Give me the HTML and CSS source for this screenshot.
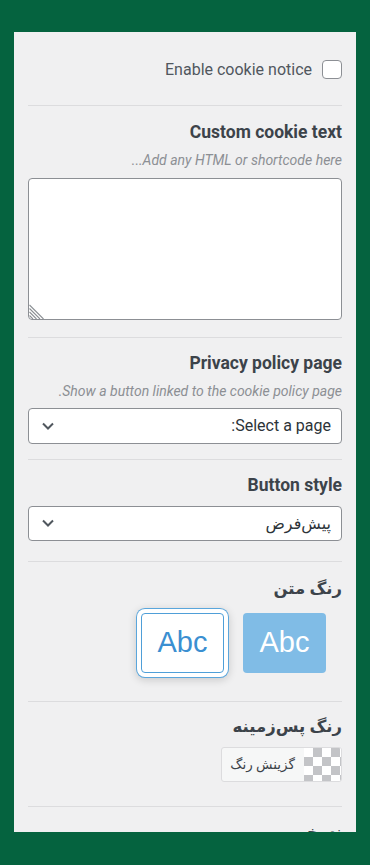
FILE: index.html
```html
<!DOCTYPE html>
<html lang="fa" dir="rtl">
<head>
<meta charset="utf-8">
<title>Cookie notice</title>
<link rel="stylesheet" href="styles.css">
</head>
<body>
<div class="panel">
  <section class="section first">
    <label class="check-row">
      <span class="checkbox"></span>
      <span class="check-label">Enable cookie notice</span>
    </label>
  </section>

  <section class="section s2">
    <h3 class="title">Custom cookie text</h3>
    <p class="desc">Add any HTML or shortcode here...</p>
    <div class="textarea-wrap">
      <textarea class="textarea"></textarea>
      <svg class="grip" width="15" height="15" viewBox="0 0 15 15" aria-hidden="true">
        <g stroke="#8c8f94" stroke-width="1.1">
          <line x1="0.5" y1="1" x2="14.5" y2="15"/>
          <line x1="0.5" y1="4.5" x2="11" y2="15"/>
          <line x1="0.5" y1="8" x2="7.5" y2="15"/>
          <line x1="0.5" y1="11.5" x2="4" y2="15"/>
        </g>
      </svg>
    </div>
  </section>

  <section class="section s3">
    <h3 class="title">Privacy policy page</h3>
    <p class="desc">Show a button linked to the cookie policy page.</p>
    <div class="select sel1">
      <span class="select-text">Select a page:</span>
      <svg class="chev" width="12" height="8" viewBox="0 0 12 8" aria-hidden="true"><polyline points="1,1.5 6,6.5 11,1.5" fill="none" stroke="#50575e" stroke-width="2"/></svg>
    </div>
  </section>

  <section class="section s4">
    <h3 class="title">Button style</h3>
    <div class="select sel2">
      <span class="select-text">پیش‌فرض</span>
      <svg class="chev" width="12" height="8" viewBox="0 0 12 8" aria-hidden="true"><polyline points="1,1.5 6,6.5 11,1.5" fill="none" stroke="#50575e" stroke-width="2"/></svg>
    </div>
  </section>

  <section class="section s5">
    <h3 class="title fa">رنگ متن</h3>
    <div class="abc-row">
      <div class="abc filled">Abc</div>
      <div class="abc outline">Abc</div>
    </div>
  </section>

  <section class="section s6">
    <h3 class="title fa">رنگ پس‌زمینه</h3>
    <div class="picker">
      <span class="swatch"></span>
      <span class="picker-label">گزینش رنگ</span>
    </div>
  </section>

  <section class="section s7">
    <h3 class="title fa">نسخه</h3>
  </section>
</div>
</body>
</html>
```

FILE: styles.css
```css
* { box-sizing: border-box; }
html, body { margin: 0; padding: 0; }
body {
  background: #05633f;
  font-family: Roboto, "DejaVu Sans", sans-serif;
  height: 865px;
  overflow: hidden;
}
.panel {
  margin: 32px 14px 0;
  height: 800px;
  overflow: hidden;
  background: #f0f0f1;
  padding: 0 14px;
}
.section {
  border-top: 1px solid #dcdcde;
  padding: 15.5px 0 16px;
}
.section.first {
  border-top: 0;
  padding: 28px 0 26px;
}
.s2 { padding-bottom: 17px; }
.s3 { padding-top: 14.5px; padding-bottom: 15px; }
.s4 { padding-bottom: 20px; }
.s5 { padding-top: 17px; padding-bottom: 28px; }
.s6 { padding-bottom: 21px; }

.check-row {
  display: flex;
  align-items: center;
  gap: 10px;
  height: 19px;
}
.checkbox {
  width: 20px;
  height: 19px;
  border: 1px solid #8c8f94;
  border-radius: 4px;
  background: #fff;
  flex: none;
}
.check-label {
  font-size: 16px;
  color: #50575e;
}
.title {
  margin: 0;
  font-size: 17.5px;
  font-weight: 700;
  color: #3c434a;
  line-height: 20px;
}
.title.fa {
  font-size: 16.5px;
}
.desc {
  margin: 9.5px 0 0;
  font-size: 14px;
  font-style: italic;
  color: #8c8f94;
  line-height: 18px;
}
.textarea-wrap {
  position: relative;
  margin-top: 9px;
}
.textarea {
  display: block;
  width: 100%;
  height: 142px;
  border: 1px solid #8c8f94;
  border-radius: 4px;
  background: #fff;
  resize: none;
  margin: 0;
}
.grip {
  position: absolute;
  left: 1px;
  bottom: 1px;
}
.select {
  display: flex;
  align-items: center;
  justify-content: space-between;
  height: 35.5px;
  border: 1px solid #8c8f94;
  border-radius: 4px;
  background: #fff;
  padding: 0 10px 0 13px;
  font-size: 16px;
  color: #2c3338;
}
.sel1 { margin-top: 8px; }
.sel2 { margin-top: 10.5px; }
.chev { display: block; }

.abc-row {
  display: flex;
  gap: 19px;
  margin-top: 13.5px;
  padding-right: 16px;
}
.abc {
  width: 83px;
  height: 60px;
  border-radius: 4px;
  display: flex;
  align-items: center;
  justify-content: center;
  font-family: "Liberation Sans", Arial, sans-serif;
  font-size: 29px;
}
.filled {
  background: #80bce6;
  color: #fff;
}
.outline {
  background: #fff;
  color: #3b8fd1;
  border: 1px solid #4f9fd8;
  box-shadow: 0 0 0 4px #fff, 0 0 0 5px #5aa6dc, 0 2px 8px 5px rgba(0, 0, 0, 0.16);
}

.picker {
  display: inline-flex;
  margin-top: 10px;
  height: 35px;
  border: 1px solid #dcdcde;
  border-radius: 3px;
  background: #f6f7f7;
  overflow: hidden;
}
.swatch {
  width: 37px;
  background-color: #fff;
  background-image: conic-gradient(#c3c4c7 25%, transparent 0 50%, #c3c4c7 0 75%, transparent 0);
  background-size: 18px 18px;
}
.picker-label {
  padding: 0 9px 0 8px;
  font-size: 13.5px;
  line-height: 33px;
  color: #3c434a;
}
```
